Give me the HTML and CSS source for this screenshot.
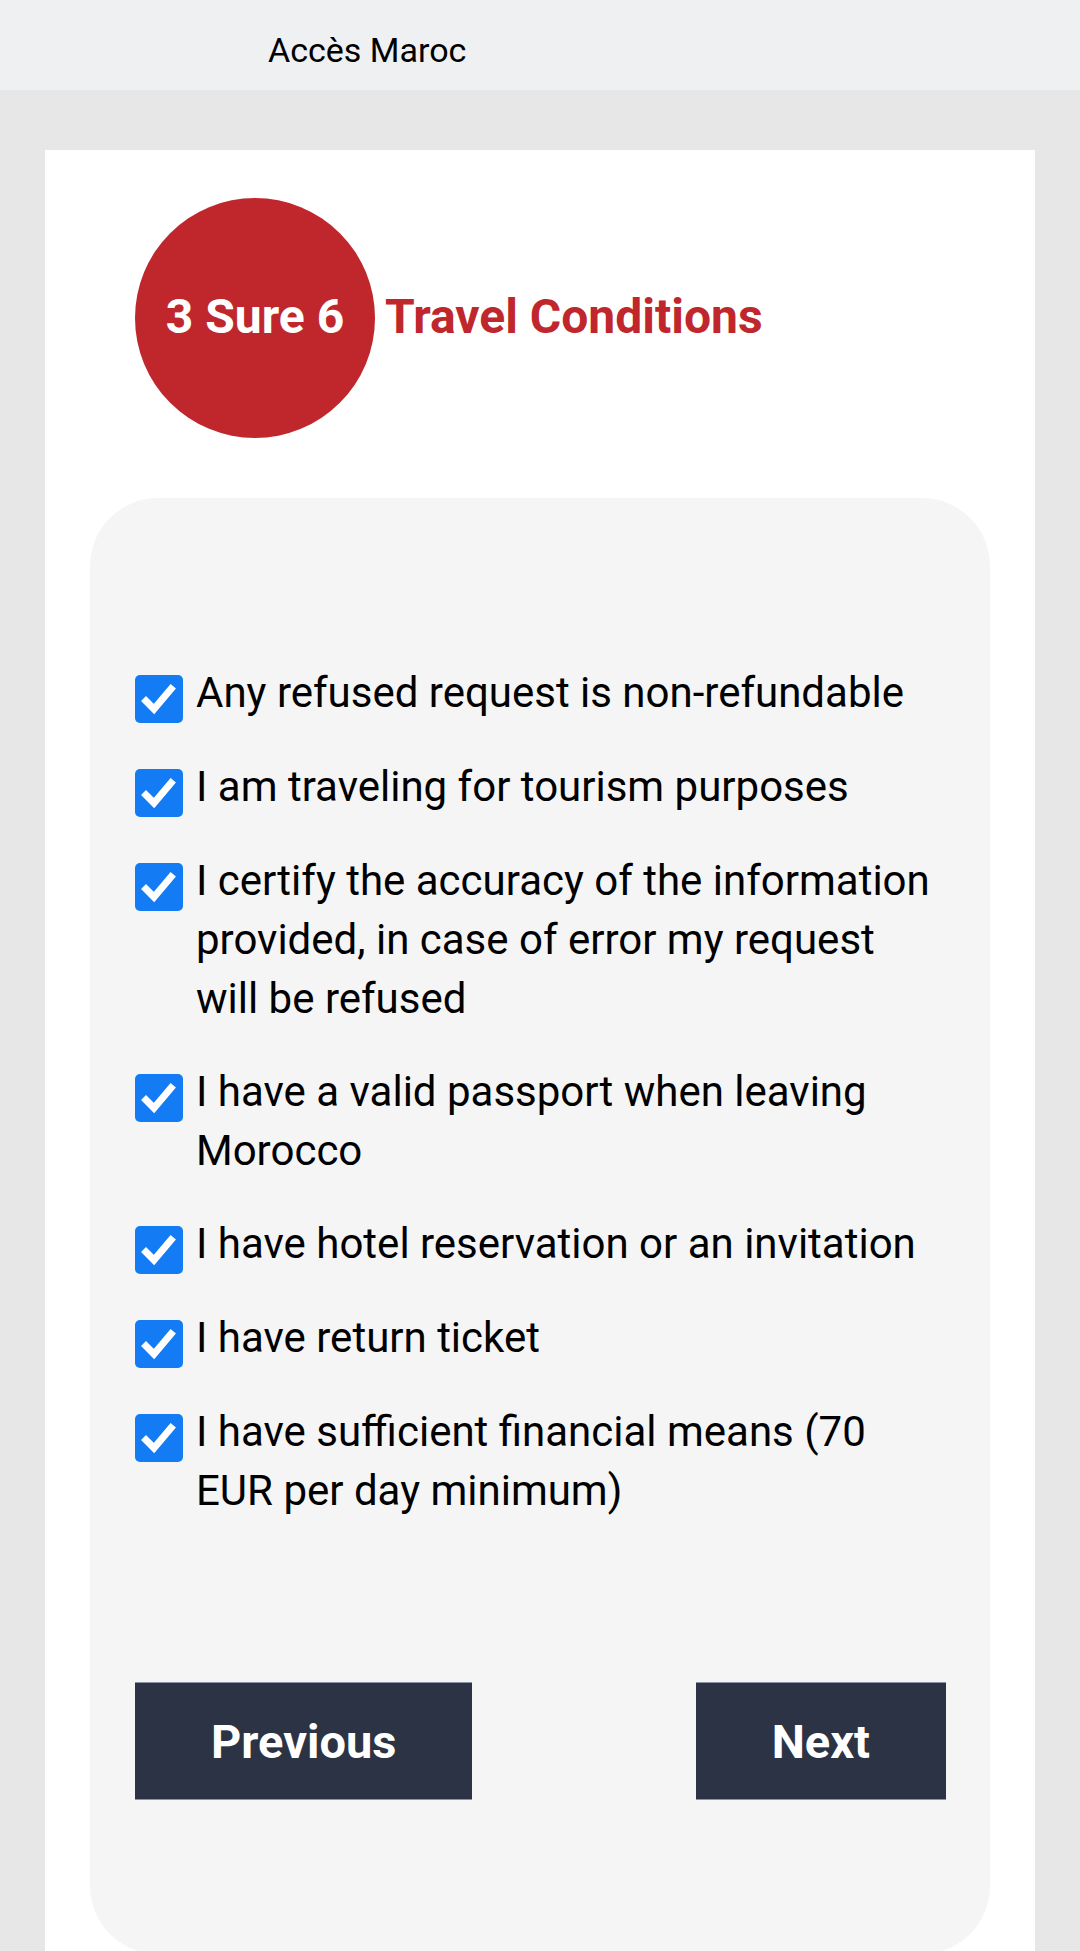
FILE: index.html
```html
<!DOCTYPE html>
<html lang="en">
<head>
<meta charset="utf-8">
<title>Accès Maroc - Travel Conditions</title>
<link rel="stylesheet" href="styles.css">
</head>
<body>
<header class="topbar"><span class="brand">Accès Maroc</span></header>
<main class="page">
  <section class="card">
    <div class="step-head">
      <div class="step-badge">3 Sure 6</div>
      <h1 class="step-title">Travel Conditions</h1>
    </div>
    <div class="panel">
      <ul class="conditions">
        <li class="cond"><span class="check"><svg viewBox="0 0 48 48"><polyline points="11,26 19,34 36,14"/></svg></span><span class="cond-text">Any refused request is non-refundable</span></li>
        <li class="cond"><span class="check"><svg viewBox="0 0 48 48"><polyline points="11,26 19,34 36,14"/></svg></span><span class="cond-text">I am traveling for tourism purposes</span></li>
        <li class="cond"><span class="check"><svg viewBox="0 0 48 48"><polyline points="11,26 19,34 36,14"/></svg></span><span class="cond-text">I certify the accuracy of the information provided, in case of error my request will be refused</span></li>
        <li class="cond"><span class="check"><svg viewBox="0 0 48 48"><polyline points="11,26 19,34 36,14"/></svg></span><span class="cond-text">I have a valid passport when leaving Morocco</span></li>
        <li class="cond"><span class="check"><svg viewBox="0 0 48 48"><polyline points="11,26 19,34 36,14"/></svg></span><span class="cond-text">I have hotel reservation or an invitation</span></li>
        <li class="cond"><span class="check"><svg viewBox="0 0 48 48"><polyline points="11,26 19,34 36,14"/></svg></span><span class="cond-text">I have return ticket</span></li>
        <li class="cond"><span class="check"><svg viewBox="0 0 48 48"><polyline points="11,26 19,34 36,14"/></svg></span><span class="cond-text">I have sufficient financial means (70 EUR per day minimum)</span></li>
      </ul>
      <div class="actions">
        <button class="btn" type="button">Previous</button>
        <button class="btn" type="button">Next</button>
      </div>
    </div>
  </section>
</main>
</body>
</html>
```
FILE: styles.css
```css
* { box-sizing: border-box; }
html, body {
  margin: 0;
  padding: 0;
}
body {
  background: #e7e7e7;
  font-family: Roboto, "Liberation Sans", Arial, sans-serif;
  color: #000;
}
.topbar {
  height: 90px;
  background: #eff0f2;
  padding: 30px 0 0 268px;
}
.brand {
  font-size: 34px;
  line-height: 40px;
  color: #000;
}
.page {
  padding: 60px 45px 0 45px;
}
.card {
  background: #fff;
  padding: 48px 45px 0 45px;
}
.step-head {
  display: flex;
  align-items: center;
  gap: 10px;
  padding-left: 45px;
}
.step-badge {
  width: 240px;
  height: 240px;
  flex: none;
  border-radius: 50%;
  background: #c0272d;
  color: #fff;
  font-weight: 700;
  font-size: 48px;
  display: flex;
  align-items: center;
  justify-content: center;
  padding-bottom: 4px;
}
.step-title {
  margin: 0 0 4px 0;
  font-size: 48px;
  font-weight: 700;
  color: #c0272d;
}
.panel {
  margin-top: 60px;
  background: #f5f5f5;
  border-radius: 68px;
  padding: 165px 44px 154px 45px;
}
.conditions {
  list-style: none;
  margin: 0;
  padding: 0;
  display: flex;
  flex-direction: column;
  gap: 34px;
}
.cond {
  display: flex;
  align-items: flex-start;
  gap: 13px;
  font-size: 42px;
  line-height: 59px;
}
.check {
  flex: none;
  width: 48px;
  height: 48px;
  margin-top: 12px;
  border-radius: 5px;
  background: #137cf4;
  display: flex;
}
.check svg {
  width: 48px;
  height: 48px;
}
.check polyline {
  fill: none;
  stroke: #fff;
  stroke-width: 7;
  stroke-linecap: square;
  stroke-linejoin: miter;
}
.cond-text {
  flex: 1;
}
.actions {
  margin-top: 162px;
  display: flex;
  justify-content: space-between;
}
.btn {
  height: 118px;
  padding: 0 76px;
  background: #2b3344;
  color: #fff;
  border: 0;
  border-top: 1px solid #8a93a3;
  border-bottom: 1px solid #8a93a3;
  font-family: Roboto, "Liberation Sans", Arial, sans-serif;
  font-weight: 700;
  font-size: 47px;
  border-radius: 0;
}
```
